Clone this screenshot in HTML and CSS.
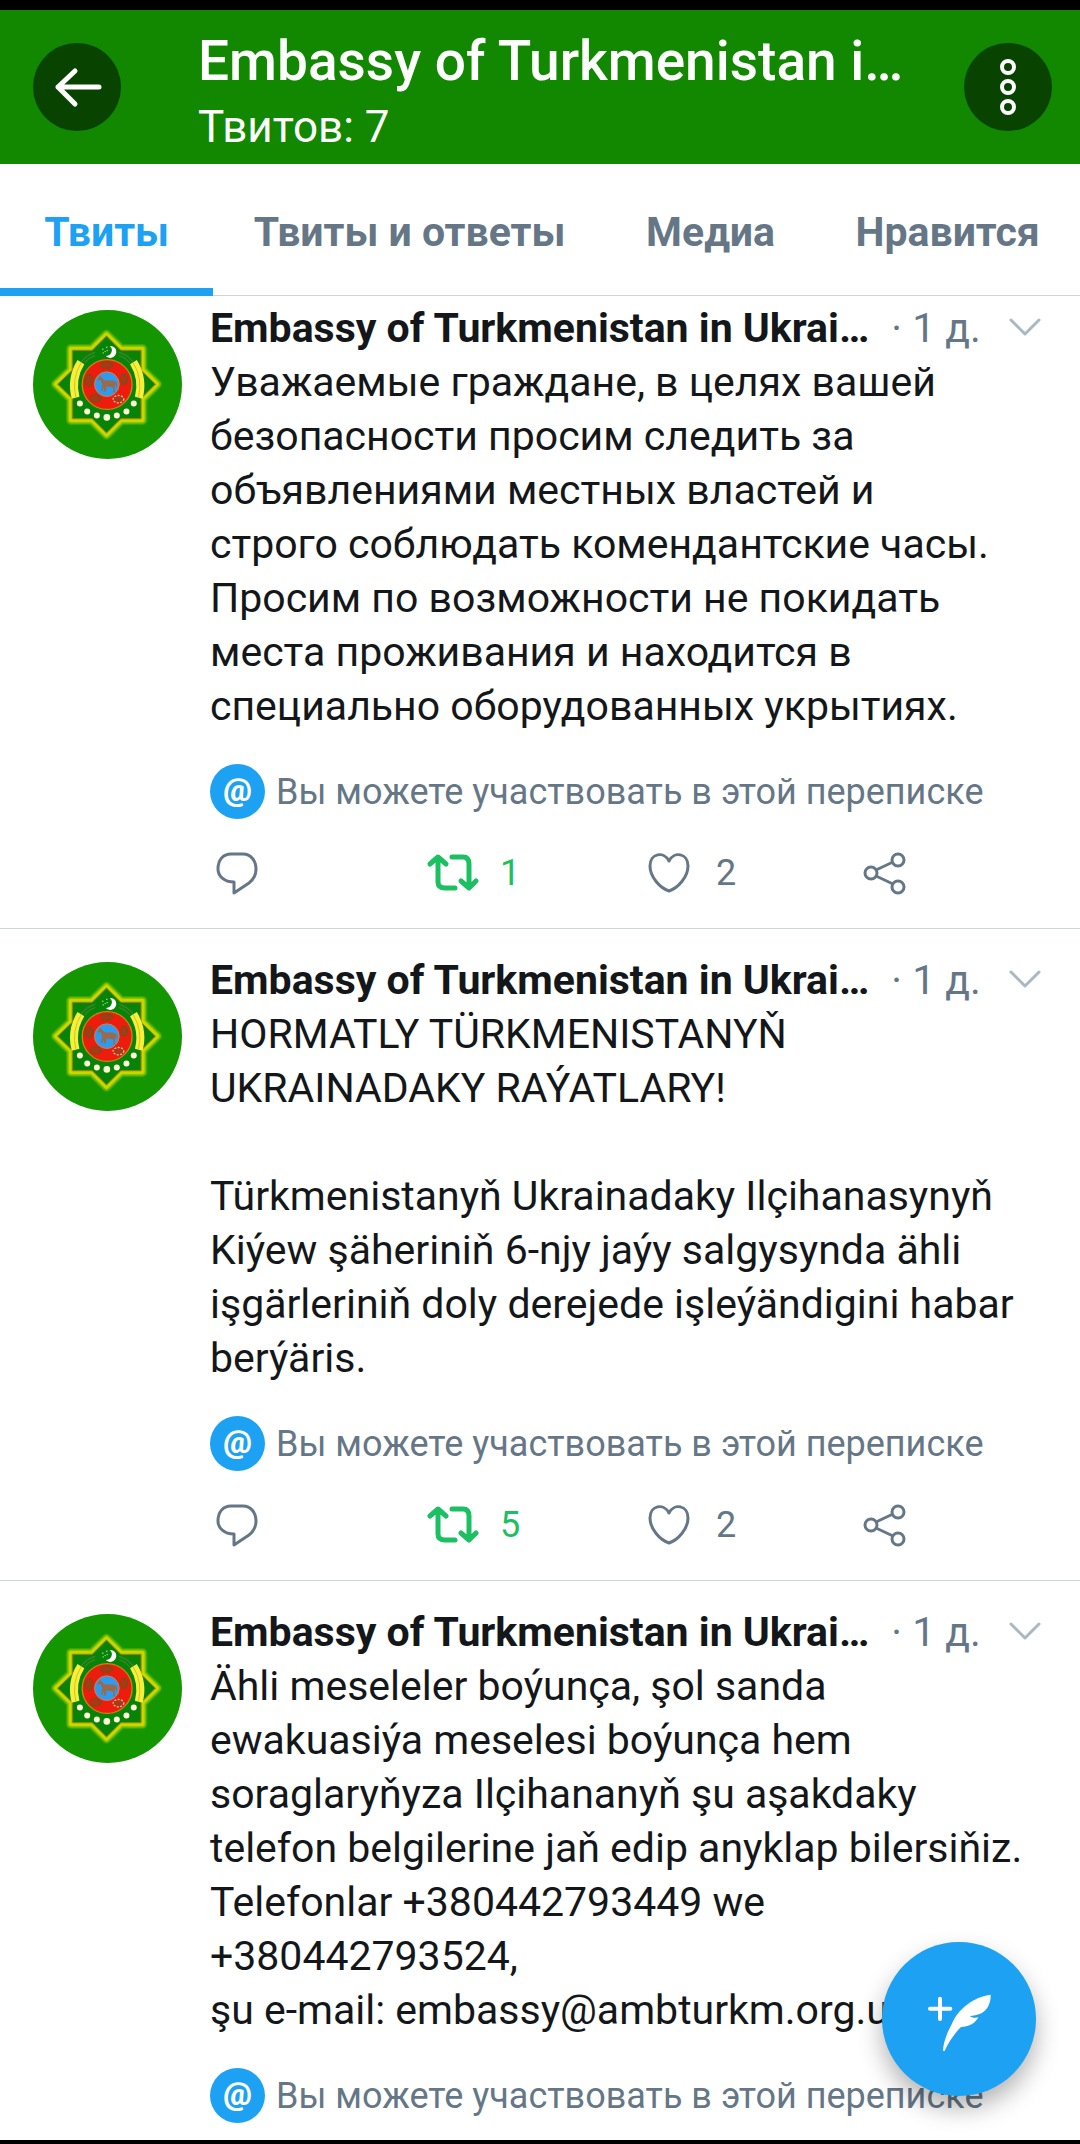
FILE: index.html
```html
<!DOCTYPE html>
<html lang="ru">
<head>
  <meta charset="UTF-8">
  <meta name="viewport" content="width=device-width, initial-scale=1">
  <title>Embassy of Turkmenistan in Ukraine</title>
  <link rel="stylesheet" href="styles.css">
</head>
<body>

<svg class="sprite" aria-hidden="true">
  <symbol id="emblem" viewBox="39 29 448 448">
    <circle cx="263" cy="253" r="224" fill="#149600"/>
    <g fill="none" stroke="#d8e000" stroke-linejoin="round">
      <path stroke-width="30" stroke-opacity=".2" d="M260 103L304 146H368V209L412 252L368 296V360H304L260 404L216 360H153V296L108 252L153 209V146H216Z"/>
      <path stroke-width="22" stroke-opacity=".4" d="M260 103L304 146H368V209L412 252L368 296V360H304L260 404L216 360H153V296L108 252L153 209V146H216Z"/>
      <path stroke-width="13" stroke-opacity=".8" d="M260 103L304 146H368V209L412 252L368 296V360H304L260 404L216 360H153V296L108 252L153 209V146H216Z"/>
      <path fill="#078407" stroke="#b07c00" stroke-width="3" d="M260 107L303 150H364V210L407 252L364 295V356H303L260 399L217 356H157V295L113 252L157 210V150H217Z"/>
    </g>
    <g fill="none">
      <path stroke="#187c10" stroke-width="20" d="M224 160Q200 168 186 188M300 160Q324 168 338 188"/>
      <path stroke="#2e9a22" stroke-width="3" d="M226 156Q200 164 184 184M226 166Q206 172 194 188M298 156Q324 164 340 184M298 166Q318 172 330 188"/>
      <path stroke="#f4f03c" stroke-width="24" d="M183 186Q152 236 167 293M341 186Q372 236 357 293"/>
      <path stroke="#dcc020" stroke-width="3" d="M184 187Q154 236 168 292M340 187Q370 236 356 292"/>
    </g>
    <circle cx="262" cy="253" r="75" fill="#ed1c0c" stroke="#c58a10" stroke-width="4"/>
    <g fill="#a83a14" stroke="#5c5a1c" stroke-width="4" stroke-dasharray="6 4">
      <ellipse cx="260" cy="195" rx="18" ry="10"/>
      <ellipse cx="313" cy="237" rx="10" ry="15"/>
      <ellipse cx="207" cy="240" rx="12" ry="17"/>
      <ellipse cx="227" cy="295" rx="16" ry="11"/>
      <ellipse cx="296" cy="297" rx="16" ry="11" stroke="#f0b8a8"/>
    </g>
    <circle cx="261" cy="252" r="37" fill="#2d9bf0" stroke="#d8803c" stroke-width="3"/>
    <path fill="#9c6a48" d="M234 236L241 227L250 237L257 241H279L290 246L293 264L286 253L284 272L289 277H280V261L260 259L258 274H252L253 258L248 272H243L247 254L243 240L235 241Z"/>
    <g fill="#fff8d8">
      <circle cx="180" cy="310" r="9"/>
      <circle cx="202" cy="334" r="9"/>
      <circle cx="231" cy="346" r="9"/>
      <circle cx="261" cy="352" r="10"/>
      <circle cx="291" cy="346" r="9"/>
      <circle cx="320" cy="334" r="9"/>
      <circle cx="342" cy="310" r="9"/>
    </g>
    <path fill="#fff" d="M270 137A18 18 0 1 1 258 167A17 17 0 0 0 270 137Z"/>
    <g fill="#bdf0b0">
      <circle cx="249" cy="147" r="2"/>
      <circle cx="261" cy="141" r="2"/>
      <circle cx="250" cy="158" r="2"/>
      <circle cx="262" cy="151" r="2"/>
      <circle cx="256" cy="154" r="2"/>
    </g>
  </symbol>
  <symbol id="reply" viewBox="0 0 54 54">
    <path fill="none" stroke="#657786" stroke-width="3" stroke-linejoin="round" d="M21 8H33C41 8 46 15 46 23C46 29 44 33 39 37L24 47V36C14 36 8 30 8 23C8 14 13 8 21 8Z"/>
  </symbol>
  <symbol id="retweet" viewBox="0 0 54 54">
    <path fill="none" stroke="#1dbf63" stroke-width="5" stroke-linecap="round" stroke-linejoin="round" d="M4 18L12 11L20 18M12 13V36Q12 42 19 42H29M26 11H37Q43 11 43 18V41M35 35L43 42L50 35"/>
  </symbol>
  <symbol id="heart" viewBox="0 0 54 54">
    <path fill="none" stroke="#657786" stroke-width="3" stroke-linejoin="round" d="M27 15C22 5 8 7 8 20C8 31 18 42 27 45C36 42 46 31 46 20C46 7 32 5 27 15Z"/>
  </symbol>
  <symbol id="share" viewBox="0 0 54 54">
    <g fill="none" stroke="#657786" stroke-width="3">
      <circle cx="13" cy="27" r="6"/>
      <circle cx="40" cy="14" r="6"/>
      <circle cx="40" cy="41" r="6"/>
      <path d="M18 24L35 16M18 30L35 38"/>
    </g>
  </symbol>
  <symbol id="chevron" viewBox="0 0 32 20">
    <path fill="none" stroke="#aab8c2" stroke-width="3" stroke-linecap="round" stroke-linejoin="round" d="M2 2L16 16L30 2"/>
  </symbol>
</svg>

<header class="header">
  <button class="round-button" type="button" aria-label="Назад">
    <svg viewBox="0 0 88 88"><path fill="none" stroke="#fff" stroke-width="5" stroke-linecap="round" stroke-linejoin="round" d="M66 44H25M42 28L25 44L42 61"/></svg>
  </button>
  <div class="heading">
    <h1>Embassy of Turkmenistan i…</h1>
    <p>Твитов: 7</p>
  </div>
  <button class="round-button" type="button" aria-label="Ещё">
    <svg viewBox="0 0 88 88">
      <g fill="none" stroke="#fff" stroke-width="4">
        <circle cx="44" cy="24" r="6"/>
        <circle cx="44" cy="44" r="6"/>
        <circle cx="44" cy="64" r="6"/>
      </g>
    </svg>
  </button>
</header>

<nav class="tabs">
  <a class="active" href="#tweets">Твиты</a>
  <a href="#replies">Твиты и ответы</a>
  <a href="#media">Медиа</a>
  <a href="#likes">Нравится</a>
</nav>

<main class="timeline" id="tweets">
  <article class="tweet">
    <svg class="avatar"><use href="#emblem"/></svg>
    <div class="tweet-main">
      <div class="tweet-top">
        <h2>Embassy of Turkmenistan in Ukrai…</h2>
        <span class="time">· 1 д.</span>
        <button class="more" type="button" aria-label="Меню"><svg><use href="#chevron"/></svg></button>
      </div>
      <p class="text">Уважаемые граждане, в целях вашей<br>безопасности просим следить за<br>объявлениями местных властей и<br>строго соблюдать комендантские часы.<br>Просим по возможности не покидать<br>места проживания и находится в<br>специально оборудованных укрытиях.</p>
      <div class="note"><span class="badge">@</span><span>Вы можете участвовать в этой переписке</span></div>
      <div class="actions">
        <button type="button" aria-label="Ответить"><svg><use href="#reply"/></svg></button>
        <button class="retweeted" type="button"><svg><use href="#retweet"/></svg>1</button>
        <button type="button"><svg><use href="#heart"/></svg>2</button>
        <button type="button" aria-label="Поделиться"><svg><use href="#share"/></svg></button>
      </div>
    </div>
  </article>

  <article class="tweet">
    <svg class="avatar"><use href="#emblem"/></svg>
    <div class="tweet-main">
      <div class="tweet-top">
        <h2>Embassy of Turkmenistan in Ukrai…</h2>
        <span class="time">· 1 д.</span>
        <button class="more" type="button" aria-label="Меню"><svg><use href="#chevron"/></svg></button>
      </div>
      <p class="text">HORMATLY TÜRKMENISTANYŇ<br>UKRAINADAKY RAÝATLARY!<br><br>Türkmenistanyň Ukrainadaky Ilçihanasynyň<br>Kiýew şäheriniň 6-njy jaýy salgysynda ähli<br>işgärleriniň doly derejede işleýändigini habar<br>berýäris.</p>
      <div class="note"><span class="badge">@</span><span>Вы можете участвовать в этой переписке</span></div>
      <div class="actions">
        <button type="button" aria-label="Ответить"><svg><use href="#reply"/></svg></button>
        <button class="retweeted" type="button"><svg><use href="#retweet"/></svg>5</button>
        <button type="button"><svg><use href="#heart"/></svg>2</button>
        <button type="button" aria-label="Поделиться"><svg><use href="#share"/></svg></button>
      </div>
    </div>
  </article>

  <article class="tweet">
    <svg class="avatar"><use href="#emblem"/></svg>
    <div class="tweet-main">
      <div class="tweet-top">
        <h2>Embassy of Turkmenistan in Ukrai…</h2>
        <span class="time">· 1 д.</span>
        <button class="more" type="button" aria-label="Меню"><svg><use href="#chevron"/></svg></button>
      </div>
      <p class="text">Ähli meseleler boýunça, şol sanda<br>ewakuasiýa meselesi boýunça hem<br>soraglaryňyza Ilçihananyň şu aşakdaky<br>telefon belgilerine jaň edip anyklap bilersiňiz.<br>Telefonlar +380442793449 we<br>+380442793524,<br>şu e-mail: embassy@ambturkm.org.ua</p>
      <div class="note"><span class="badge">@</span><span>Вы можете участвовать в этой переписке</span></div>
    </div>
  </article>
</main>

<button class="compose" type="button" aria-label="Новый твит">
  <svg viewBox="126 126 462 462">
    <path fill="none" stroke="#fff" stroke-width="12" stroke-linecap="round" d="M270 326H331M300 296V357"/>
    <path fill="#fff" d="M452 284C402 290 352 328 335 373C319 403 310 430 309 453L314 453C325 428 345 398 363 381C385 380 405 372 415 352C405 355 396 353 389 348C400 347 412 344 421 341C445 330 453 305 452 284Z"/>
  </svg>
</button>

</body>
</html>
```
FILE: styles.css
```css
* {
  box-sizing: border-box;
}
body {
  margin: 0;
  height: 100vh;
  display: flex;
  flex-direction: column;
  overflow: hidden;
  border-top: 10px solid #000;
  border-bottom: 4px solid #000;
  background: #fff;
  color: #14171a;
  font-family: Roboto, "Liberation Sans", sans-serif;
  font-size: 41px;
  line-height: 54px;
}
h1, h2, p {
  margin: 0;
}
button {
  padding: 0;
  border: 0;
  background: none;
  color: inherit;
  font: inherit;
  cursor: pointer;
}
svg {
  display: block;
}
.sprite {
  position: absolute;
  width: 0;
  height: 0;
}

.header {
  flex: none;
  display: flex;
  align-items: center;
  height: 154px;
  padding: 0 28px 0 33px;
  background: #118800;
  color: #fff;
}
.round-button {
  flex: none;
  width: 88px;
  height: 88px;
  border-radius: 50%;
  background: #084400;
}
.heading {
  flex: 1;
  min-width: 0;
  padding: 9px 0 0 77px;
  white-space: nowrap;
}
.heading h1 {
  font-size: 55px;
  font-weight: 500;
  line-height: 64px;
}
.heading p {
  margin-top: 7px;
  font-size: 44px;
}

.tabs {
  flex: none;
  display: flex;
  height: 132px;
  border-bottom: 1px solid #cdd6d4;
}
.tabs a {
  flex: 1 0 auto;
  display: flex;
  align-items: center;
  justify-content: center;
  padding: 12px 40px 0;
  border-bottom: 8px solid transparent;
  margin-bottom: -1px;
  color: #657786;
  font-weight: 700;
  text-decoration: none;
}
.tabs a:first-child {
  padding-left: 44px;
  padding-right: 44px;
}
.tabs a.active {
  border-color: #1da1f2;
  color: #1da1f2;
}

.timeline {
  flex: 1;
  min-height: 0;
  overflow: hidden;
}
.tweet {
  display: flex;
  gap: 28px;
  padding: 24px 32px 27px 33px;
  border-bottom: 1px solid #cdd6d4;
}
.tweet:first-child {
  padding-top: 5px;
}
.avatar {
  flex: none;
  width: 149px;
  height: 149px;
  margin-top: 9px;
}
.tweet-main {
  flex: 1;
  min-width: 0;
}
.tweet-top {
  display: flex;
  align-items: center;
  white-space: nowrap;
}
.tweet-top h2 {
  font-size: 41px;
  font-weight: 700;
}
.time {
  margin-left: 22px;
  color: #657786;
}
.more {
  margin: 0 7px 0 auto;
}
.more svg {
  width: 32px;
  height: 20px;
}
.note {
  display: flex;
  align-items: center;
  gap: 11px;
  margin-top: 28px;
  color: #657786;
  font-size: 36px;
  line-height: 58px;
  white-space: nowrap;
}
.note span {
  padding-top: 2px;
}
.note .badge {
  width: 55px;
  height: 55px;
  padding: 0;
  border-radius: 50%;
  background: #1da1f2;
  color: #fff;
  font-size: 32px;
  font-weight: 900;
  line-height: 52px;
  text-align: center;
}
.actions {
  display: grid;
  grid-template-columns: 1fr 1fr 1fr auto;
  margin: 24px 136px 0 0;
  color: #657786;
  font-size: 36px;
  line-height: 56px;
}
.actions button {
  display: flex;
  align-items: center;
  gap: 20px;
}
.actions svg {
  width: 54px;
  height: 54px;
}
.actions .retweeted {
  color: #1dbf63;
}

.compose {
  position: fixed;
  right: 44px;
  bottom: 48px;
  width: 154px;
  height: 154px;
  border-radius: 50%;
  background: #1da1f2;
  box-shadow: 0 12px 24px rgba(0, 0, 0, 0.3);
}
```
